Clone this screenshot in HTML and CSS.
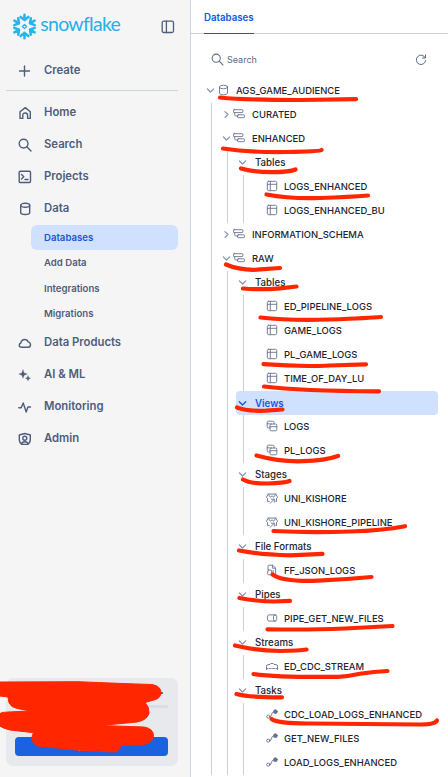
FILE: index.html
```html
<!DOCTYPE html>
<html lang="en">
<head>
<meta charset="utf-8">
<title>Databases</title>
<link rel="stylesheet" href="styles.css">
</head>
<body>
<svg class="sprite" width="0" height="0">
  <symbol id="down" viewBox="0 0 9 9"><path d="M1.3 2.8 4.5 6l3.2-3.2"/></symbol>
  <symbol id="right" viewBox="0 0 9 9"><path d="M3 1.6 6 4.5 3 7.4"/></symbol>
  <symbol id="db" viewBox="0 0 12 12"><ellipse cx="5.500" cy="3" rx="4" ry="1.8"/><path d="M1.500 3v6c0 2.4 8 2.4 8 0V3"/></symbol>
  <symbol id="schema" viewBox="0 0 12 12"><rect x=".5" y="1.700" width="9.300" height="2.900" rx=".7"/><rect x="4.600" y="6.800" width="6.800" height="2.900" rx=".7"/><path d="M1.700 4.800v1.600q0 1.700 1.500 1.700h1.400"/></symbol>
  <symbol id="table" viewBox="0 0 12 12"><rect x="1.3" y="1.3" width="9.4" height="9.4" rx="1.3"/><path d="M1.3 4.3h9.4M4.3 1.3v9.4"/></symbol>
  <symbol id="view" viewBox="0 0 12 12"><path d="M4 8H2.3Q1.2 8 1.2 6.9V2.3q0-1.1 1.1-1.1h4.6Q8 1.2 8 2.3V4M1.2 3.8H4"/><rect x="4" y="4" width="6.8" height="6.8" rx="1.2"/><path d="M4 6.7h6.8"/></symbol>
  <symbol id="stage" viewBox="0 0 12 12"><path d="M3.200 9.500H1.500V6.500L.4 5.200 2.200 2h7.600l1.800 3.200-1.100 1.300v3H9.800M2.200 2 4.300 5.200 6 3.800l1.700 1.400L9.800 2M4.200 11.300 8 7.500M5.300 7.200h3v3"/></symbol>
  <symbol id="file" viewBox="0 0 12 12"><path d="M2 5.5V2.2Q2 1.2 3 1.2h3.5L9.6 4v6.8H6M6.4 1.2v3h3.2"/><rect x="1.7" y="6" width="4" height="4.8" rx="1"/><path d="M7.2 6.4v2.2"/></symbol>
  <symbol id="pipe" viewBox="0 0 12 12"><path d="M9.2 2.9H3Q1.3 2.9 1.3 6T3 9.1h6.2"/><rect x="7.5" y="2.9" width="3.2" height="6.2" rx="1.6"/></symbol>
  <symbol id="stream" viewBox="0 0 12 12"><path d="M.5 9.500V6.200Q.5 4.600 2 4.600h1Q4.300 4.600 4.800 3.500h2.400Q7.700 4.600 9 4.600h1q1.500 0 1.500 1.600v3.300"/><path d="M.5 8.500h11" stroke-dasharray="1.600 1.500"/></symbol>
  <symbol id="task" viewBox="0 0 12 12"><circle cx="2.3" cy="8.6" r="1.6"/><circle class="solid" cx="9.4" cy="3.7" r="1.9"/><path d="M3.9 8.700c2.600 0 1-5 3.700-5"/></symbol>
  <symbol id="search" viewBox="0 0 14 14"><circle cx="5.600" cy="5.600" r="4.400"/><path d="m8.800 8.800 4.200 4.200"/></symbol>
</svg>
<div class="app">
  <aside class="sidebar">
    <header class="brand">
      <svg class="logo" width="112" height="28" viewBox="0 0 112 28">
        <g class="flake" transform="translate(12.500 13.500) scale(1.120)">
          <path d="m0-1.900 1.900 1.900L0 1.900-1.900 0z" class="core"/>
          <g id="arm"><path d="M0-10.400v4.700M-3.500-8.500 0-5.700 3.500-8.500"/></g>
          <use href="#arm" transform="rotate(60)"/><use href="#arm" transform="rotate(120)"/><use href="#arm" transform="rotate(180)"/><use href="#arm" transform="rotate(240)"/><use href="#arm" transform="rotate(300)"/>
        </g>
        <text x="28.300" y="18.400" textLength="80.500" lengthAdjust="spacing">snowflake</text>
      </svg>
      <svg class="panel" width="14" height="14" viewBox="0 0 14 14"><rect x="1.200" y="1.200" width="11.300" height="11.300" rx="1.500"/><path d="M5.400 1.200v11.300"/></svg>
    </header>
    <a class="item create"><svg viewBox="0 0 14 14"><path d="M6.500 2v10M1.500 7h10"/></svg>Create</a>
    <nav class="nav">
      <a class="item"><svg viewBox="0 0 14 14"><path d="M2 12.400V5.800L7.300 1.600l5 4.200v6.600H9.600V9.200Q9.600 7 7.200 7T4.800 9.200v3.200z"/></svg>Home</a>
      <a class="item"><svg><use href="#search"/></svg>Search</a>
      <a class="item"><svg viewBox="0 0 14 14"><rect x="1.200" y="1.200" width="11.300" height="11.300" rx="1"/><path d="m3.500 4.500 2.300 2.200-2.300 2.200M7 9.500h3"/></svg>Projects</a>
      <a class="item"><svg viewBox="0 0 14 14"><ellipse cx="7.200" cy="3.200" rx="4.500" ry="2"/><path d="M2.700 3.200v7.300c0 2.700 9 2.700 9 0V3.200"/></svg>Data</a>
      <div class="subnav">
        <a class="sub active">Databases</a>
        <a class="sub">Add Data</a>
        <a class="sub low">Integrations</a>
        <a class="sub low">Migrations</a>
      </div>
      <a class="item"><svg viewBox="0 0 14 14"><path d="M3.600 11.200Q1.200 11.200 1.200 9.200q0-1.500 1.600-2.200Q3.600 3.500 6.700 3.500q2.600 0 3.500 2.400 2.300.6 2.300 2.800 0 2.500-2.400 2.500z"/></svg>Data Products</a>
      <a class="item"><svg viewBox="0 0 14 14"><path class="star" d="M5 1.800 6.200 4.900 9.300 6 6.200 7.200 5 10.300 3.800 7.200.8 6l3-1.100zM10 7.700l.8 1.900 1.800.7-1.800.7-.8 1.900-.8-1.900-1.800-.7 1.800-.7z"/></svg>AI &amp; ML</a>
      <a class="item"><svg viewBox="0 0 14 14"><path d="M.8 7.700h2.400L5.200 3l3 9 1.700-5h2.600"/></svg>Monitoring</a>
      <a class="item"><svg viewBox="0 0 14 14"><path d="M6.800 1.500 12.300 3v4.500q0 3.300-2.700 4.900H4Q1.300 10.800 1.300 7.500V3z"/><circle cx="6.800" cy="6.300" r="2"/><path d="M3.700 12q0-2.200 3.100-2.200t3.100 2.200"/></svg>Admin</a>
    </nav>
    <section class="card">
      <span class="status"></span>
      <div class="meter"></div>
      <button class="upgrade">Upgrade</button>
    </section>
  </aside>
  <main class="main">
    <div class="tabs"><a class="tab">Databases</a></div>
    <div class="finder">
      <svg class="glass" width="13" height="13"><use href="#search"/></svg>
      <span class="hint">Search</span>
      <svg class="refresh" width="12" height="12" viewBox="0 0 12 12"><path d="M10.200 3.600A4.700 4.700 0 1 0 10.700 6.600M10.500 1v3H7.400"/></svg>
    </div>
    <div class="tree">
      <div class="row"><svg class="chev"><use href="#down"/></svg><svg class="ico"><use href="#db"/></svg>AGS_GAME_AUDIENCE</div>
      <div class="kids">
        <div class="row schema"><svg class="chev"><use href="#right"/></svg><svg class="ico"><use href="#schema"/></svg>CURATED</div>
        <div class="row schema"><svg class="chev"><use href="#down"/></svg><svg class="ico"><use href="#schema"/></svg>ENHANCED</div>
        <div class="kids">
          <div class="row group"><svg class="chev"><use href="#down"/></svg>Tables</div>
          <div class="kids">
            <div class="row leaf"><svg class="ico"><use href="#table"/></svg>LOGS_ENHANCED</div>
            <div class="row leaf"><svg class="ico"><use href="#table"/></svg>LOGS_ENHANCED_BU</div>
          </div>
        </div>
        <div class="row schema"><svg class="chev"><use href="#right"/></svg><svg class="ico"><use href="#schema"/></svg>INFORMATION_SCHEMA</div>
        <div class="row schema"><svg class="chev"><use href="#down"/></svg><svg class="ico"><use href="#schema"/></svg>RAW</div>
        <div class="kids">
          <div class="row group"><svg class="chev"><use href="#down"/></svg>Tables</div>
          <div class="kids">
            <div class="row leaf"><svg class="ico"><use href="#table"/></svg>ED_PIPELINE_LOGS</div>
            <div class="row leaf"><svg class="ico"><use href="#table"/></svg>GAME_LOGS</div>
            <div class="row leaf"><svg class="ico"><use href="#table"/></svg>PL_GAME_LOGS</div>
            <div class="row leaf"><svg class="ico"><use href="#table"/></svg>TIME_OF_DAY_LU</div>
          </div>
          <div class="row group selected"><svg class="chev"><use href="#down"/></svg>Views</div>
          <div class="kids">
            <div class="row leaf"><svg class="ico"><use href="#view"/></svg>LOGS</div>
            <div class="row leaf"><svg class="ico"><use href="#view"/></svg>PL_LOGS</div>
          </div>
          <div class="row group"><svg class="chev"><use href="#down"/></svg>Stages</div>
          <div class="kids">
            <div class="row leaf"><svg class="ico"><use href="#stage"/></svg>UNI_KISHORE</div>
            <div class="row leaf"><svg class="ico"><use href="#stage"/></svg>UNI_KISHORE_PIPELINE</div>
          </div>
          <div class="row group"><svg class="chev"><use href="#down"/></svg>File Formats</div>
          <div class="kids">
            <div class="row leaf"><svg class="ico"><use href="#file"/></svg>FF_JSON_LOGS</div>
          </div>
          <div class="row group"><svg class="chev"><use href="#down"/></svg>Pipes</div>
          <div class="kids">
            <div class="row leaf"><svg class="ico"><use href="#pipe"/></svg>PIPE_GET_NEW_FILES</div>
          </div>
          <div class="row group"><svg class="chev"><use href="#down"/></svg>Streams</div>
          <div class="kids">
            <div class="row leaf"><svg class="ico"><use href="#stream"/></svg>ED_CDC_STREAM</div>
          </div>
          <div class="row group"><svg class="chev"><use href="#down"/></svg>Tasks</div>
          <div class="kids">
            <div class="row leaf"><svg class="ico"><use href="#task"/></svg>CDC_LOAD_LOGS_ENHANCED</div>
            <div class="row leaf"><svg class="ico"><use href="#task"/></svg>GET_NEW_FILES</div>
            <div class="row leaf"><svg class="ico"><use href="#task"/></svg>LOAD_LOGS_ENHANCED</div>
          </div>
        </div>
      </div>
    </div>
  </main>
</div>
<svg class="marks" width="448" height="777" viewBox="0 0 448 777">
  <path d="M220 97.500Q245 100 300 100L356 99.200"/>
  <path d="M223 148.500Q250 152.500 285 152T321.500 150"/>
  <path d="M241 168.500Q252 172 272 172.200 290 172 295.500 169.500"/>
  <path d="M266.500 194.500Q290 199 320 198T368 195.500"/>
  <path d="M226 264.500Q240 270.500 257 269.700L280 268"/>
  <path d="M243 288.500Q262 290 280 288.300L296.500 286.500"/>
  <path d="M260.500 317.500Q290 321 330 319.500T381 317"/>
  <path d="M263.500 364.200Q300 367 330 365.500L366 364.300"/>
  <path d="M264 386.500Q300 391 379 391.300"/>
  <path d="M237 407.500Q247 411.500 266 410.700L282.500 409.500"/>
  <path d="M256.500 455.500Q280 462 303 461.200 325 460.500 338 456"/>
  <path d="M243 479.500Q250 483.700 268 483.500 284 483.200 289.500 481"/>
  <path d="M273.500 531Q310 533 350 531.500 382 530.500 405 526.200"/>
  <path d="M239 550.500Q260 554.500 290 555.300L322.500 553.800"/>
  <path d="M272.500 574.500Q283 582 318 580.700 345 579.500 371.500 577"/>
  <path d="M239.500 598Q258 601.500 274.500 601.500L290 600.800"/>
  <path d="M267.500 629.300Q310 630 345 628.500L392.500 626"/>
  <path d="M235 645.500Q256 650.500 280 651 300 650.700 306.500 649.500"/>
  <path d="M253.500 674Q280 677.500 338 676.800 348 676.500 360 673.800 374 671.500 387.500 671"/>
  <path d="M236.500 694Q250 697.500 282 697.300"/>
  <path d="M271.500 719Q278 723.700 310 723.500L420 724.500Q435 724.500 437 720.500"/>
  <path class="blot" d="M0 682 78 681.700Q120 683.500 152 684.500 161 686 161 693 160.500 699 152 700.500L145 702.500Q149.500 707 149 713 147.500 720 137 722L101 725.500 144 727Q153.500 728.500 153.500 736 152.500 743 144 744.500L121 745.500Q119 752.400 113 752L76 750 38 746Q31.500 743 32 738 32 735 33.500 732.700L10 730Q2 728 0 726V713.500Q2 712 8 712L31 711Q17 709 12 706.500 8 703.500 8 697L0 696z"/>
</svg>
</body>
</html>
```

FILE: styles.css
```css
* { box-sizing: border-box; }
body {
  margin: 0;
  width: 448px;
  height: 777px;
  overflow: hidden;
  background: #fff;
  font-family: Inter, "Liberation Sans", sans-serif;
  position: relative;
}
svg { fill: none; stroke: currentColor; flex: none; stroke-linecap: round; stroke-linejoin: round; }
.sprite { display: none; }
.app { display: flex; height: 777px; }

.sidebar {
  width: 191px;
  flex: none;
  background: #f5f5f5;
  border-right: 1px solid #c8d3e5;
  padding: 0 12px 11px 6px;
  display: flex;
  flex-direction: column;
  color: #4f5d7d;
}
.brand { display: flex; align-items: center; justify-content: space-between; height: 54px; padding: 0 3px 0 6px; flex: none; }
.logo { color: #29b5e8; overflow: visible; }
.flake { stroke-width: 2.300; }
.core { stroke-width: 1.200; }
.logo text { font-family: Lato, sans-serif; font-size: 19.500px; font-variant-ligatures: none; fill: #25b0e8; stroke: none; }
.panel { stroke-width: 1.300; }
.item {
  height: 32px;
  display: flex;
  align-items: center;
  gap: 12px;
  padding-left: 12px;
  font-size: 11.300px;
  font-weight: 600;
  stroke-width: 1.400;
}
.item svg { width: 14px; height: 14px; position: relative; top: 1px; }
.star { fill: currentColor; stroke-width: .3; }
.create { height: 37px; padding-bottom: 5px; border-bottom: 1px solid #c8d3e5; flex: none; }
.nav { padding-top: 5px; }
.subnav { padding: 1px 0; }
.sub { display: flex; align-items: center; height: 25px; margin-left: 25px; padding-left: 13px; border-radius: 6px; font-size: 9.600px; font-weight: 600; }
.low { padding-top: 2px; }
.active { background: #d0e1ff; color: #1459d9; }
.card { margin-top: auto; height: 88px; border-radius: 7px; background: #e8e9ed; padding: 13px 10px 10px 9px; display: flex; flex-direction: column; }
.status { width: 4px; height: 2px; margin: 1px 5px 1px auto; border-radius: 2px; background: #465563; }
.meter { height: 3px; margin-top: 10px; border-radius: 2px; background: #d7dee5; }
.upgrade { margin-top: auto; height: 19px; border: 0; border-radius: 4px; background: #1a62e0; color: #fff; font: 600 10px/17px Inter, sans-serif; padding: 0 0 2px; }

.main { flex: 1; min-width: 0; }
.tabs { height: 34px; border-bottom: 1px solid #ccd0dc; padding-left: 13px; display: flex; }
.tab { height: 34px; width: 50px; border-bottom: 1px solid #1459d9; color: #1459d9; font-size: 9.700px; font-weight: 600; line-height: 35px; }
.finder { height: 45px; display: flex; align-items: center; padding: 6px 21px 0 20px; color: #5d6a85; }
.glass { stroke-width: 1.100; }
.hint { flex: 1; margin-left: 3px; font-size: 9px; }
.tree { padding-left: 15px; color: #1e252f; font-size: 9.450px; font-weight: 500; }
.row { display: flex; align-items: center; height: 24px; padding-bottom: 2px; white-space: nowrap; }
.chev { width: 9px; height: 9px; color: #8490aa; margin-right: 3px; stroke-width: 1.200; }
.ico { width: 12px; height: 12px; color: #66738f; margin-right: 6px; stroke-width: .9; }
.solid { fill: currentColor; }
.kids { margin-left: 5px; border-left: 1px solid #c8cedb; padding-left: 10px; }
.schema .ico { margin-left: -1px; margin-right: 7px; }
.group { font-size: 9.700px; }
.group .chev { margin-right: 8px; }
.leaf { padding-left: 12px; }
.leaf .ico { margin-left: -.5px; margin-right: 6.500px; }
.selected { margin-left: -2px; margin-right: 10px; padding: 0 0 0 2px; border-radius: 4px; background: #d0e1ff; color: #1459d9; font-weight: 600; }
.selected .chev { color: #1459d9; stroke-width: 1.400; }
.marks { position: absolute; left: 0; top: 0; color: #ff2600; stroke-width: 4.200; pointer-events: none; }
.blot { fill: currentColor; stroke-width: 1; }
```
